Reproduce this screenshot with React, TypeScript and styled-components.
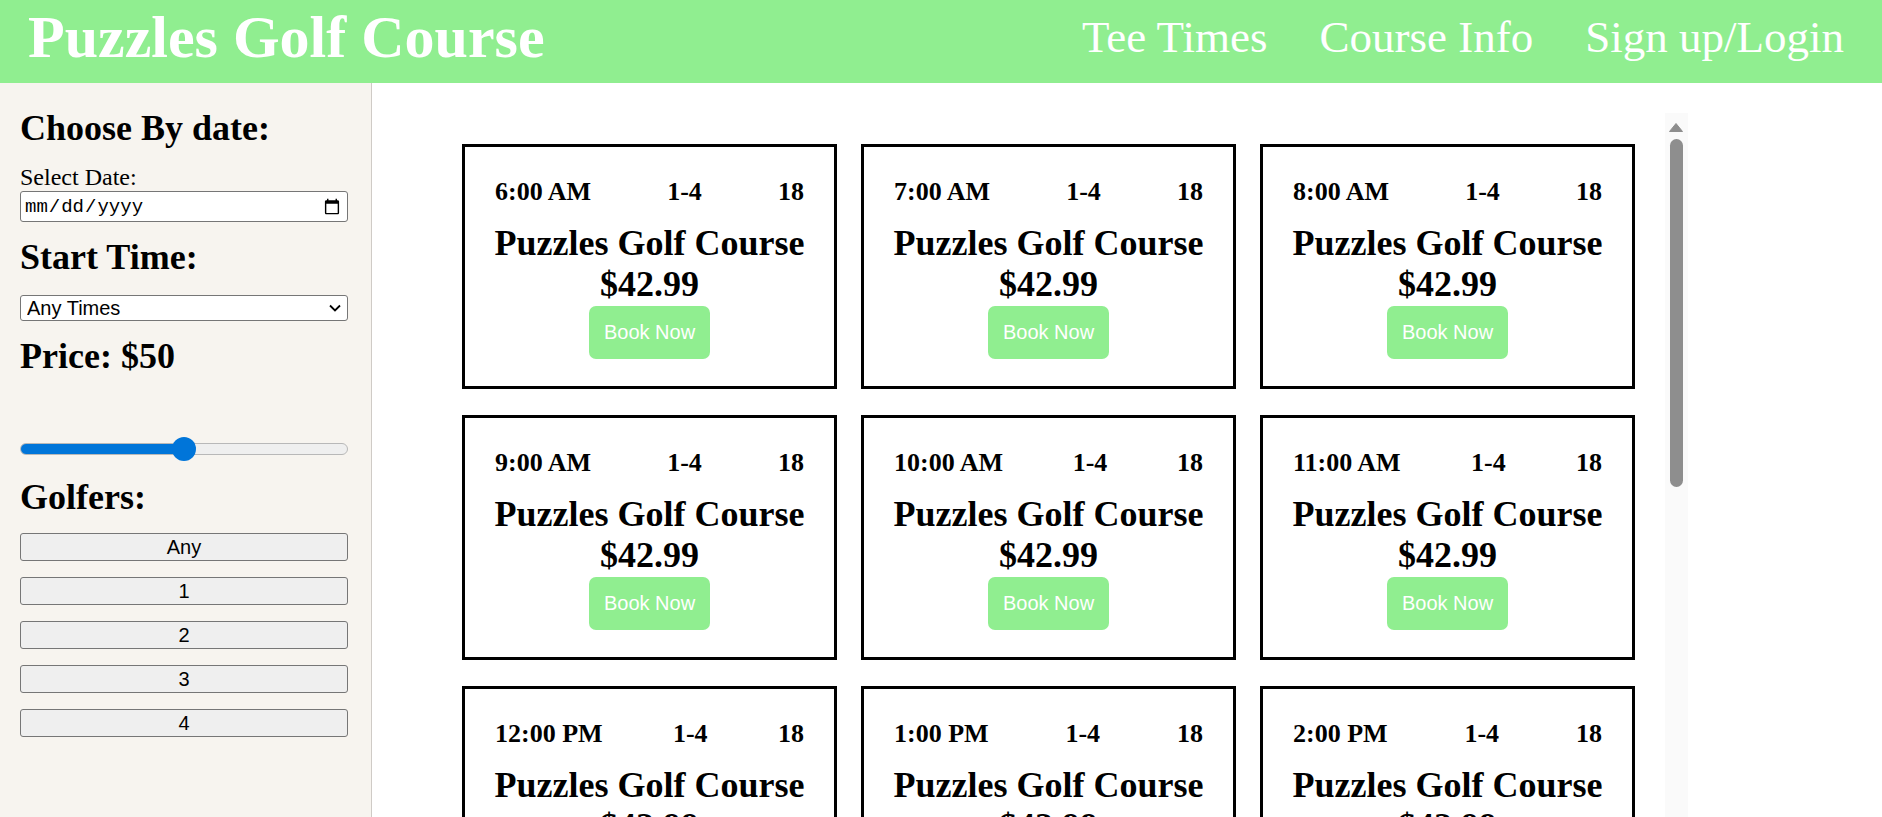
import React from "react";
import styled, { createGlobalStyle } from "styled-components";

const GlobalStyle = createGlobalStyle`
  html, body {
    margin: 0;
    padding: 0;
    overflow: hidden;
    background: #ffffff;
  }
  body {
    font-family: "Liberation Serif", "Times New Roman", serif;
    color: #000;
  }
  * { box-sizing: border-box; }
`;

const GREEN = "#90ee90";

const Page = styled.div`
  display: flex;
  flex-direction: column;
  height: 100vh;
  width: 100%;
  overflow: hidden;
`;

const Header = styled.header`
  height: 83px;
  flex: 0 0 83px;
  background: ${GREEN};
  display: flex;
  align-items: flex-start;
  justify-content: space-between;
  padding: 0 38px 0 28px;
`;

const Brand = styled.h1`
  margin: 0;
  padding-top: 3px;
  font-size: 60px;
  line-height: 69px;
  font-weight: 700;
  color: #fff;
  white-space: nowrap;
`;

const Nav = styled.nav`
  display: flex;
  gap: 52px;
  padding-top: 11px;
`;

const NavLink = styled.a`
  font-size: 45px;
  line-height: 52px;
  color: #fff;
  text-decoration: none;
  white-space: nowrap;
`;

const Body = styled.div`
  flex: 1;
  display: flex;
  min-height: 0;
`;

const Sidebar = styled.aside`
  width: 372px;
  flex: 0 0 372px;
  background: #f7f4ef;
  border-right: 1px solid #cfcbc6;
  padding: 25px 23px 0 20px;
  display: flex;
  flex-direction: column;
`;

const FilterTitle = styled.h2<{ $gap?: number }>`
  margin: ${(p) => p.$gap ?? 0}px 0 0 0;
  font-size: 36px;
  line-height: 41px;
  font-weight: 700;
  white-space: nowrap;
`;

const FieldLabel = styled.label`
  display: block;
  margin-top: 14px;
  font-size: 24px;
  line-height: 28px;
`;

const DateInput = styled.input`
  width: 100%;
  height: 31px;
  margin: 0;
  padding: 0 6px 0 3px;
  border: 1px solid #767676;
  border-radius: 3px;
  background: #fff;
  font-family: "Liberation Mono", "DejaVu Sans Mono", monospace;
  font-size: 19px;
  color: #000;
  &::-webkit-calendar-picker-indicator {
    width: 18px;
    height: 18px;
    padding: 0;
    margin: 0;
  }
`;

const SelectWrap = styled.div`
  position: relative;
  width: 100%;
  margin-top: 17px;
`;

const Select = styled.select`
  appearance: none;
  -webkit-appearance: none;
  width: 100%;
  height: 26px;
  margin: 0;
  padding: 0 24px 0 6px;
  border: 1px solid #767676;
  border-radius: 3px;
  background: #fff;
  font-family: "Liberation Sans", Arial, sans-serif;
  font-size: 20px;
  line-height: 24px;
  color: #000;
`;

const Chevron = styled.svg`
  position: absolute;
  right: 7px;
  top: 9px;
  width: 12px;
  height: 8px;
  pointer-events: none;
`;

const Range = styled.input`
  -webkit-appearance: none;
  appearance: none;
  width: 100%;
  height: 24px;
  margin: 60px 0 0 0;
  padding: 0;
  background: transparent;
  &::-webkit-slider-runnable-track {
    height: 12px;
    border-radius: 6px;
    border: 1px solid #b8b8b8;
    background: linear-gradient(to right, #0075d9 0%, #0075d9 50%, #efefef 50%, #efefef 100%);
  }
  &::-webkit-slider-thumb {
    -webkit-appearance: none;
    appearance: none;
    width: 24px;
    height: 24px;
    margin-top: -7px;
    border-radius: 50%;
    background: #0075d9;
    border: none;
  }
`;

const GolferList = styled.div`
  display: flex;
  flex-direction: column;
  gap: 16px;
  margin-top: 15px;
`;

const GolferButton = styled.button`
  width: 100%;
  height: 28px;
  margin: 0;
  padding: 0;
  border: 1px solid #767676;
  border-radius: 3px;
  background: #efefef;
  font-family: "Liberation Sans", Arial, sans-serif;
  font-size: 20px;
  line-height: 26px;
  color: #000;
`;

const Main = styled.main`
  flex: 1;
  min-width: 0;
  overflow: hidden;
  padding: 30px 0 0 90px;
`;

const ScrollFrame = styled.div`
  position: relative;
  width: 1226px;
  height: 740px;
`;

const Scroller = styled.div`
  width: 100%;
  height: 100%;
  overflow: hidden;
  padding: 31px 23px 60px 0;
`;

const ScrollTrack = styled.div`
  position: absolute;
  top: 0;
  right: 0;
  width: 23px;
  height: 100%;
  background: #fafafa;
`;

const ScrollArrow = styled.svg`
  position: absolute;
  top: 10px;
  left: 4px;
  width: 14px;
  height: 9px;
`;

const ScrollThumb = styled.div`
  position: absolute;
  top: 26px;
  left: 5px;
  width: 13px;
  height: 348px;
  border-radius: 7px;
  background: #8e8e8e;
`;

const Grid = styled.div`
  display: grid;
  grid-template-columns: repeat(3, 375px);
  column-gap: 24px;
  row-gap: 26px;
`;

const Card = styled.article`
  width: 375px;
  border: 3px solid #000;
  padding: 30px 30px 27px;
  display: flex;
  flex-direction: column;
  align-items: center;
  background: #fff;
`;

const InfoRow = styled.div`
  width: 100%;
  display: flex;
  justify-content: space-between;
  font-size: 26px;
  line-height: 30px;
  font-weight: 700;
  margin-bottom: 16px;
  white-space: nowrap;
`;

const CardTitle = styled.div`
  font-size: 36px;
  line-height: 41px;
  font-weight: 700;
  white-space: nowrap;
  text-align: center;
`;

const BookButton = styled.button`
  margin-top: 1px;
  padding: 15px;
  border: none;
  border-radius: 7px;
  background: ${GREEN};
  color: #fff;
  font-family: "Liberation Sans", Arial, sans-serif;
  font-size: 20px;
  line-height: 23px;
`;

const times = [
  "6:00 AM",
  "7:00 AM",
  "8:00 AM",
  "9:00 AM",
  "10:00 AM",
  "11:00 AM",
  "12:00 PM",
  "1:00 PM",
  "2:00 PM",
  "3:00 PM",
  "4:00 PM",
  "5:00 PM",
  "6:00 PM",
  "7:00 PM",
  "8:00 PM",
];

export default function App() {
  return (
    <>
      <GlobalStyle />
      <Page>
        <Header>
          <Brand>Puzzles Golf Course</Brand>
          <Nav>
            <NavLink href="#">Tee Times</NavLink>
            <NavLink href="#">Course Info</NavLink>
            <NavLink href="#">Sign up/Login</NavLink>
          </Nav>
        </Header>
        <Body>
          <Sidebar>
            <FilterTitle>Choose By date:</FilterTitle>
            <FieldLabel htmlFor="date">Select Date:</FieldLabel>
            <DateInput id="date" type="date" />
            <FilterTitle $gap={15}>Start Time:</FilterTitle>
            <SelectWrap>
              <Select defaultValue="any">
                <option value="any">Any Times</option>
                <option value="morning">Morning</option>
                <option value="afternoon">Afternoon</option>
              </Select>
              <Chevron viewBox="0 0 12 8">
                <polyline points="1,1.5 6,6.5 11,1.5" fill="none" stroke="#000" strokeWidth="1.8" />
              </Chevron>
            </SelectWrap>
            <FilterTitle $gap={15}>Price: $50</FilterTitle>
            <Range type="range" min={0} max={100} defaultValue={50} />
            <FilterTitle $gap={16}>Golfers:</FilterTitle>
            <GolferList>
              {["Any", "1", "2", "3", "4"].map((g) => (
                <GolferButton key={g}>{g}</GolferButton>
              ))}
            </GolferList>
          </Sidebar>
          <Main>
            <ScrollFrame>
              <Scroller>
                <Grid>
                  {times.map((t) => (
                    <Card key={t}>
                      <InfoRow>
                        <span>{t}</span>
                        <span>1-4</span>
                        <span>18</span>
                      </InfoRow>
                      <CardTitle>Puzzles Golf Course</CardTitle>
                      <CardTitle>$42.99</CardTitle>
                      <BookButton>Book Now</BookButton>
                    </Card>
                  ))}
                </Grid>
              </Scroller>
              <ScrollTrack aria-hidden="true">
                <ScrollArrow viewBox="0 0 14 9">
                  <polygon points="7,0.5 13.5,8.5 0.5,8.5" fill="#8e8e8e" strokeLinejoin="round" stroke="#8e8e8e" strokeWidth="1" />
                </ScrollArrow>
                <ScrollThumb />
              </ScrollTrack>
            </ScrollFrame>
          </Main>
        </Body>
      </Page>
    </>
  );
}
